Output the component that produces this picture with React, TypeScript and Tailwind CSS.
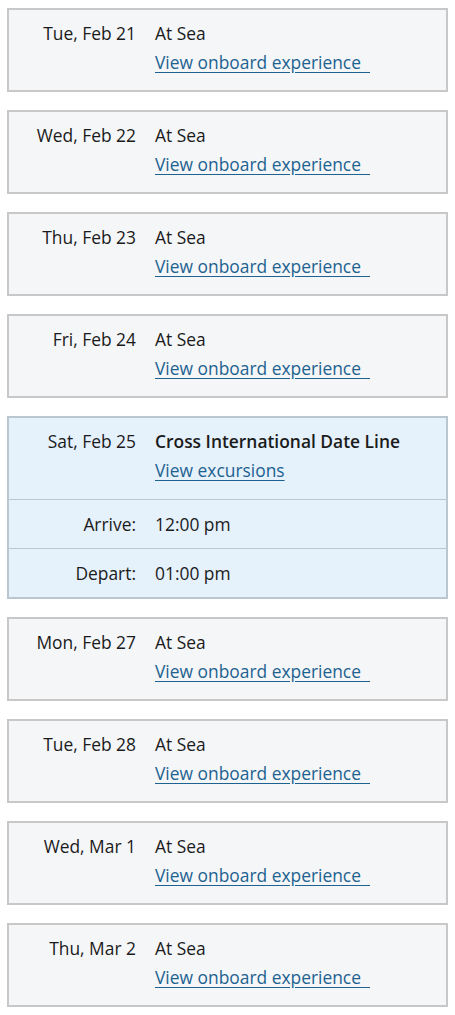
import React from 'react';

type Day = { date: string; title: string; link: string; highlight?: boolean; arrive?: string; depart?: string };

const days: Day[] = [
  { date: 'Tue, Feb 21', title: 'At Sea', link: 'View onboard experience' },
  { date: 'Wed, Feb 22', title: 'At Sea', link: 'View onboard experience' },
  { date: 'Thu, Feb 23', title: 'At Sea', link: 'View onboard experience' },
  { date: 'Fri, Feb 24', title: 'At Sea', link: 'View onboard experience' },
  {
    date: 'Sat, Feb 25',
    title: 'Cross International Date Line',
    link: 'View excursions',
    highlight: true,
    arrive: '12:00 pm',
    depart: '01:00 pm',
  },
  { date: 'Mon, Feb 27', title: 'At Sea', link: 'View onboard experience' },
  { date: 'Tue, Feb 28', title: 'At Sea', link: 'View onboard experience' },
  { date: 'Wed, Mar 1', title: 'At Sea', link: 'View onboard experience' },
  { date: 'Thu, Mar 2', title: 'At Sea', link: 'View onboard experience' },
];

function Row({ label, children }: { label: string; children: React.ReactNode }) {
  return (
    <div className="flex">
      <div className="w-[127px] shrink-0 text-right">{label}</div>
      <div className="ml-[19px]">{children}</div>
    </div>
  );
}

export default function App() {
  return (
    <div className="bg-white min-h-screen px-[7px] pt-[8px] flex flex-col gap-[18px] text-[17.4px] text-[#1b1b1b] font-['Open_Sans',sans-serif]">
      {days.map((d, i) =>
        d.highlight ? (
          <div key={i} className="border-2 border-[#bcc6cf] bg-[#e5f1fb]">
            <div className="pt-[9px] pb-[14px] leading-[29px]">
              <Row label={d.date}>
                <div className="font-semibold">{d.title}</div>
                <a className="block text-[#1d6290] underline underline-offset-[3px]" href="#">{d.link}</a>
              </Row>
            </div>
            <div className="border-t border-[#bcc6cf] h-[49px] flex items-center">
              <Row label="Arrive:">{d.arrive}</Row>
            </div>
            <div className="border-t border-[#bcc6cf] h-[49px] flex items-center">
              <Row label="Depart:">{d.depart}</Row>
            </div>
          </div>
        ) : (
          <div key={i} className="border-2 border-[#c8c8c8] bg-[#f4f6f8] pt-[9px] pb-[13px] leading-[29px]">
            <Row label={d.date}>
              <div>{d.title}</div>
              <a className="block text-[#1d6290] underline underline-offset-[3px] whitespace-pre" href="#">{d.link + '  '}</a>
            </Row>
          </div>
        )
      )}
    </div>
  );
}
